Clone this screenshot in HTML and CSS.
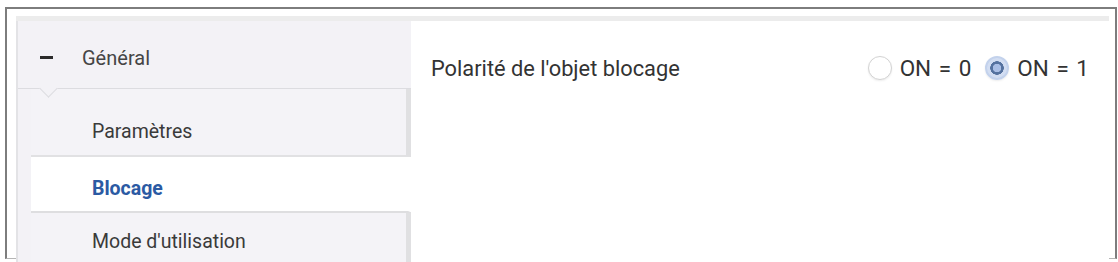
FILE: index.html
```html
<!DOCTYPE html>
<html lang="fr">
<head>
<meta charset="utf-8">
<link rel="stylesheet" href="styles.css">
</head>
<body>
<div class="frame">
  <div class="panel">
    <aside class="sidebar">
      <div class="group">
        <span class="minus"></span>
        <span class="group-label">Général</span>
        <span class="notch"></span>
      </div>
      <div class="items">
        <div class="item">Paramètres</div>
        <div class="item active">Blocage</div>
        <div class="item">Mode d'utilisation</div>
      </div>
    </aside>
    <main class="content">
      <div class="param-row">
        <span class="param-label">Polarité de l'objet blocage</span>
        <div class="radios">
          <label class="radio"><span class="dot"></span>ON = 0</label>
          <label class="radio"><span class="dot checked"></span>ON = 1</label>
        </div>
      </div>
    </main>
  </div>
</div>
</body>
</html>
```
FILE: styles.css
```css
html, body {
  margin: 0;
  padding: 0;
  background: #ffffff;
}
body {
  font-family: Roboto, "Noto Sans", sans-serif;
  color: #333;
  width: 1118px;
  height: 262px;
  overflow: hidden;
}
.frame {
  margin: 7px 1px 0 5px;
  height: 252px;
  border: 2px solid #7d7d7d;
  border-bottom: 1px solid #b5b5b5;
  box-sizing: border-box;
  padding: 7px 6px 0 9px;
  background: #fff;
}
.panel {
  display: flex;
  height: 100%;
  border-top: 5px solid #ececec;
}
.sidebar {
  width: 393px;
  flex: none;
  display: flex;
  flex-direction: column;
  background: #f3f2f6;
  border-left: 2px solid #e3e3e6;
}
.group {
  position: relative;
  flex: none;
  display: flex;
  align-items: center;
  padding-left: 22px;
  padding-top: 6px;
  box-sizing: border-box;
  height: 68px;
  border-bottom: 1px solid #dcdce0;
}
.minus {
  flex: none;
  width: 13px;
  height: 3px;
  background: #2b2b2b;
  margin-right: 29px;
}
.group-label {
  font-size: 20px;
  color: #454545;
}
.notch {
  position: absolute;
  left: 24px;
  bottom: -7px;
  width: 12px;
  height: 12px;
  background: #f3f2f6;
  transform: rotate(45deg);
  border-right: 1px solid #dcdce0;
  border-bottom: 1px solid #dcdce0;
}
.items {
  display: flex;
  flex-direction: column;
  padding-left: 13px;
}
.item {
  height: 68px;
  flex: none;
  display: flex;
  align-items: center;
  padding-left: 61px;
  font-size: 19.5px;
  color: #3a3a3a;
  background: #f4f3f7;
  border-right: 5px solid #e0e0e2;
  box-sizing: border-box;
}
.item:first-child {
  border-bottom: 2px solid #e1e1e3;
  padding-top: 18px;
}
.item.active {
  height: 56px;
  background: #ffffff;
  color: #2b5aa3;
  font-weight: 700;
  border-right-color: #ffffff;
  margin-right: -2px;
  border-bottom: 2px solid #dedee0;
  padding-top: 8px;
}
.item:last-child {
  height: 60px;
  padding-bottom: 4px;
}
.content {
  flex: 1;
  background: #fff;
  padding: 24px 20px 0 20px;
}
.param-row {
  display: flex;
  align-items: center;
  justify-content: space-between;
  height: 46px;
}
.param-label {
  font-size: 21.8px;
  color: #333;
}
.radios {
  display: flex;
  gap: 14px;
}
.radio {
  display: flex;
  align-items: center;
  gap: 8px;
  font-size: 22.5px;
  word-spacing: 2px;
  color: #333;
}
.dot {
  width: 24px;
  height: 24px;
  border-radius: 50%;
  border: 1px solid #d3d3d3;
  box-sizing: border-box;
  background: #fff;
  box-shadow: 0 1px 2px rgba(0,0,0,0.08);
}
.dot.checked {
  border: 2px solid #c3d2ec;
  background: radial-gradient(circle, #a9bee5 0 4px, #55729f 4.5px 6.5px, #d3def2 7px);
}
```
